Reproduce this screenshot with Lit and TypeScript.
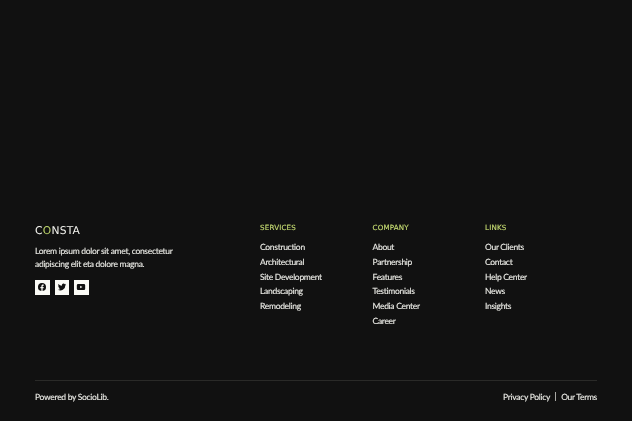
import { LitElement, html, css, svg } from "lit";
import { customElement } from "lit/decorators.js";

const columns = [
  { title: "SERVICES", links: ["Construction", "Architectural", "Site Development", "Landscaping", "Remodeling"] },
  { title: "COMPANY", links: ["About", "Partnership", "Features", "Testimonials", "Media Center", "Career"] },
  { title: "LINKS", links: ["Our Clients", "Contact", "Help Center", "News", "Insights"] },
];

const icons = [
  svg`<path d="M12 2.5a9.5 9.5 0 0 0-1.5 18.9v-6.7H8.1V12h2.4V9.9c0-2.4 1.4-3.7 3.6-3.7 1 0 2.1.2 2.1.2v2.3H15c-1.2 0-1.5.7-1.5 1.5V12h2.6l-.4 2.7h-2.2v6.7A9.5 9.5 0 0 0 12 2.5z"/>`,
  svg`<path d="M22 5.8c-.7.3-1.5.5-2.4.6.9-.5 1.5-1.3 1.8-2.3-.8.5-1.7.8-2.6 1a4.1 4.1 0 0 0-7 3.8A11.7 11.7 0 0 1 3.4 4.6a4.1 4.1 0 0 0 1.3 5.5c-.7 0-1.3-.2-1.9-.5 0 2 1.4 3.7 3.3 4.1-.6.2-1.2.2-1.9.1.5 1.6 2 2.8 3.8 2.8A8.3 8.3 0 0 1 2 18.3 11.7 11.7 0 0 0 20 8.2c.8-.6 1.5-1.4 2-2.4z"/>`,
  svg`<path fill-rule="evenodd" d="M5 5h14a3 3 0 0 1 3 3v8a3 3 0 0 1-3 3H5a3 3 0 0 1-3-3V8a3 3 0 0 1 3-3zm5 3.8v6.4l5.5-3.2z"/>`,
];

@customElement("app-root")
export class AppRoot extends LitElement {
  static styles = css`
    :host {
      display: flex;
      flex-direction: column;
      justify-content: flex-end;
      height: 421px;
      background: #111111;
      color: #f2f2ee;
      font-family: "Lato", "Open Sans", sans-serif;
      font-size: 8.5px;
      letter-spacing: -0.3px;
      -webkit-text-stroke: 0.12px currentColor;
      text-rendering: geometricPrecision;
      overflow: hidden;
    }
    .top {
      display: grid;
      grid-template-columns: 225px 112.5px 112.5px 1fr;
      padding: 0 35px;
      height: 157px;
      will-change: transform;
    }
    .logo {
      font-family: "DejaVu Sans", sans-serif;
      font-size: 10.7px;
      line-height: 12px;
      letter-spacing: 0.25px;
      margin-top: 2px;
      color: #f5f5f0;
      -webkit-text-stroke: 0;
    }
    .logo span { color: #bcd46a; }
    .desc {
      margin: 8px 0 0;
      width: 150px;
      line-height: 13px;
      color: #e9e9e4;
    }
    .social { display: flex; gap: 5px; margin-top: 9px; }
    .social div {
      width: 14.5px;
      height: 14.5px;
      background: #fbfbf6;
      display: flex;
      align-items: center;
      justify-content: center;
    }
    .social svg { width: 10px; height: 10px; fill: #111111; display: block; }
    h4 {
      margin: 0 0 10px;
      font-family: "DejaVu Sans", sans-serif;
      font-weight: 400;
      font-size: 7.1px;
      line-height: 9px;
      letter-spacing: 0.2px;
      color: #c6dc72;
      -webkit-text-stroke: 0.15px currentColor;
    }
    ul { list-style: none; margin: 0; padding: 0; display: flex; flex-direction: column; gap: 3px; }
    li { line-height: 11.8px; color: #ecece7; }
    .bottom {
      margin: 0 35px;
      border-top: 1px solid #2a2a28;
      height: 41px;
      display: flex;
      justify-content: space-between;
      align-items: center;
      color: #ecece7;
      padding-bottom: 9px;
      box-sizing: border-box;
      will-change: transform;
    }
    .legal { display: flex; align-items: center; gap: 5px; }
    .sep { width: 1px; height: 9px; background: #a8a8a4; }
  `;

  render() {
    return html`
      <div class="top">
        <div>
          <div class="logo">C<span>O</span>NSTA</div>
          <p class="desc">Lorem ipsum dolor sit amet, consectetur adipiscing elit eta dolore magna.</p>
          <div class="social">
            ${icons.map((i) => html`<div><svg viewBox="0 0 24 24">${i}</svg></div>`)}
          </div>
        </div>
        ${columns.map(
          (c) => html`<div>
            <h4>${c.title}</h4>
            <ul>${c.links.map((l) => html`<li>${l}</li>`)}</ul>
          </div>`
        )}
      </div>
      <div class="bottom">
        <span>Powered by SocioLib.</span>
        <div class="legal"><span>Privacy Policy</span><i class="sep"></i><span>Our Terms</span></div>
      </div>
    `;
  }
}
